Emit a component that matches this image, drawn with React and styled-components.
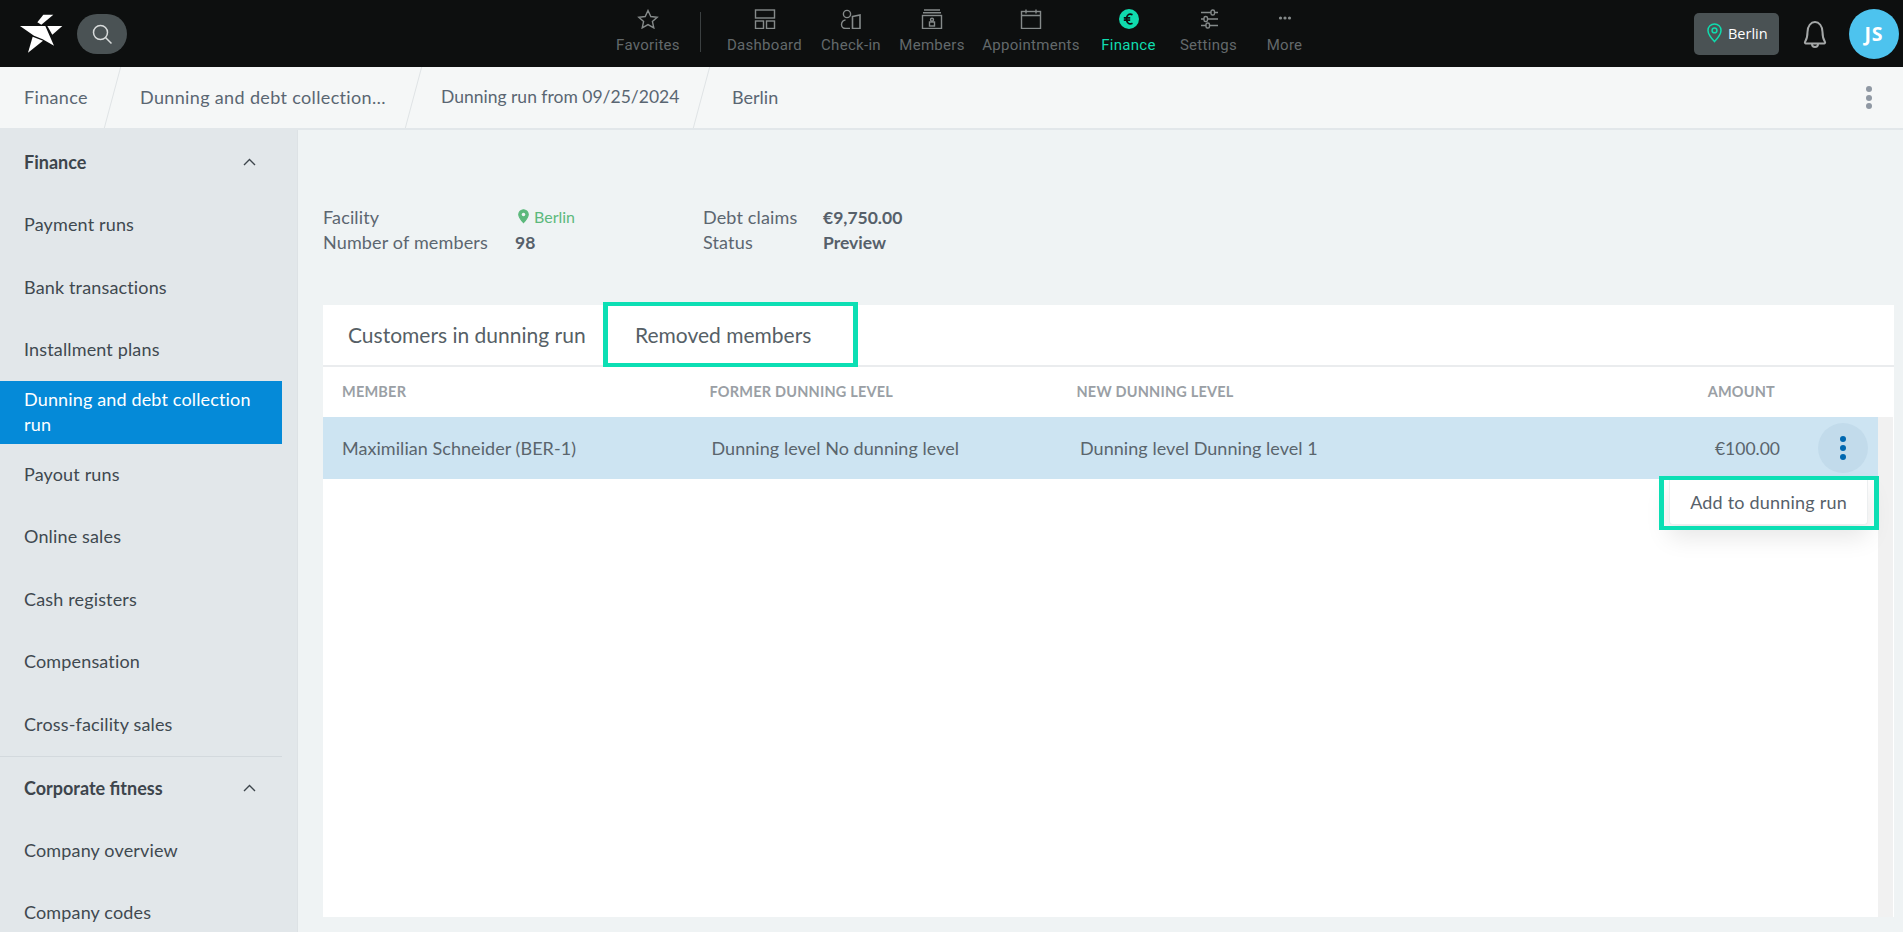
import React from "react";
import styled, { createGlobalStyle } from "styled-components";

const Global = createGlobalStyle`
  html, body { margin: 0; padding: 0; height: 100%; overflow: hidden; background: #eff3f4; }
  * { box-sizing: border-box; }
  #root { height: 100%; }
`;
const BODY_FONT = `"Lato", "Liberation Sans", sans-serif`;
const NAV_FONT = `"Roboto", "Liberation Sans", sans-serif`;
const CALLOUT = "#0cdfb4";

const Page = styled.div`
  width: 1903px; height: 932px; display: flex; flex-direction: column; overflow: hidden;
  font-family: ${BODY_FONT}; color: #5c6670;
`;
const TopBar = styled.header`
  height: 67px; flex: none; background: #0d0f0f; display: flex; align-items: center; padding-left: 19px;
`;
const Logo = styled.svg`width: 45px; height: 40px; display: block; flex: none;`;
const SearchPill = styled.button`
  width: 50px; height: 40px; margin-left: 13px; border: 0; border-radius: 20px; background: #4a5254;
  display: flex; align-items: center; justify-content: center; padding: 0; flex: none;
`;
const Nav = styled.nav`display: flex; align-items: stretch; height: 67px; margin-left: 479px;`;
const NavItem = styled.div`
  width: ${p => p.$w}px; display: flex; flex-direction: column; align-items: center; padding-top: 9px;
  font: 400 15px/20px ${NAV_FONT}; letter-spacing: .3px; color: ${p => p.$active ? "#10dcae" : "#63696b"};
  white-space: nowrap;
`;
const NavIcon = styled.svg`width: 22px; height: 20px; display: block; margin-bottom: 6px; flex: none;`;
const NavDivider = styled.div`width: 1px; height: 40px; margin: 12px 16px 0 10px; background: #3b4041; flex: none;`;
const TopRight = styled.div`margin-left: auto; display: flex; align-items: center; padding-right: 4px;`;
const LocationChip = styled.div`
  width: 85px; height: 42px; border-radius: 5px; background: #4a5254; display: flex; align-items: center;
  padding: 0 0 1px 13px; gap: 6px; color: #fff; font: 400 14.5px "Open Sans", sans-serif;
`;
const Bell = styled.svg`width: 26px; height: 31px; margin: 0 21px 0 23px; display: block;`;
const Avatar = styled.div`
  width: 50px; height: 50px; border-radius: 50%; background: #4dc3ee; color: #fff; display: flex;
  align-items: center; justify-content: center; font: 700 19.5px "Open Sans", sans-serif; letter-spacing: 1px;
`;
const CrumbBar = styled.div`
  height: 63px; flex: none; background: #f5f7f7; border-bottom: 2px solid #e2e7ea; display: flex; align-items: center;
`;
const Crumb = styled.div`
  width: ${p => p.$w}px; padding: 0 0 2px ${p => p.$pad}px; height: 100%; position: relative; display: flex; align-items: center;
  font-size: ${p => p.$size || 18}px; letter-spacing: ${p => p.$ls ?? 0.35}px; color: #5a6672; white-space: nowrap;
  ${p => p.$sep && `&::after {
    content: ""; position: absolute; right: 8px; top: 0; bottom: 0; width: 1px; background: #dfe3e5;
    transform: skewX(-15deg);
  }`}
`;
const KebabBar = styled.div`
  margin-left: auto; margin-right: 31px; display: flex; flex-direction: column; gap: 2.6px;
`;
const Dot = styled.span`
  width: ${p => p.$size}px; height: ${p => p.$size}px; border-radius: 50%; background: ${p => p.$color}; display: block;
`;
const Body = styled.div`flex: 1; display: flex; min-height: 0;`;
const Sidebar = styled.aside`
  width: 298px; flex: none; background: #e2e7ea; overflow: hidden; border-right: 1px solid #dde2e5;
`;
const SideHead = styled.div`
  width: 282px; height: ${p => p.$h}px; padding: 0 24px; display: flex; align-items: center; justify-content: space-between;
  font-size: 18px; font-weight: 700; color: #3d454c;
  ${p => p.$top && `border-top: 1px solid #d3d9dd;`}
`;
const SideItem = styled.div`
  width: 282px; height: 62.4px; padding: 0 24px; display: flex; align-items: center;
  font-size: 18px; letter-spacing: .15px; line-height: 25.5px; color: ${p => p.$active ? "#fff" : "#3f4950"};
  background: ${p => p.$active ? "#058ad8" : "transparent"};
`;
const Main = styled.main`flex: 1; display: flex; flex-direction: column; padding: 75px 9px 15px 25px; min-width: 0;`;
const Info = styled.div`
  display: grid; grid-template-columns: 192px 188px 120px 1fr; grid-auto-rows: 25px; align-items: center;
  margin-bottom: 50px;
`;
const Label = styled.div`font-size: 18px; letter-spacing: .15px; color: #5c6670; padding-bottom: 2px;`;
const Value = styled.div`font-size: 17.5px; font-weight: 700; color: #56606a;`;
const FacilityValue = styled.div`
  display: flex; align-items: center; gap: 5px; padding-left: 3px; margin-top: -2px; color: #5cb97c; font-size: 16px;
`;
const Panel = styled.section`flex: 1; background: #fff; display: flex; flex-direction: column; min-height: 0;`;
const Tabs = styled.div`height: 62px; flex: none; border-bottom: 2px solid #eaecee; display: flex;`;
const Tab = styled.div`
  width: ${p => p.$w}px; padding-left: ${p => p.$pad}px; display: flex; align-items: center; position: relative;
  font-size: 21px; color: #565f66; padding-bottom: 2px; white-space: nowrap;
`;
const TabCallout = styled.span`
  position: absolute; left: 0; right: 0; top: -3px; bottom: -2px; border: 5px solid ${CALLOUT}; border-width: 4.5px 5px;
`;
const HeadRow = styled.div`
  height: 50px; flex: none; display: grid; grid-template-columns: 367.5px 367px 1fr auto; align-items: center;
  padding: 0 119px 2px 19px; font-size: 14.5px; letter-spacing: .2px; font-weight: 700; color: #9a9fa5; text-transform: uppercase;
`;
const ListArea = styled.div`flex: 1; display: flex; min-height: 0; padding-right: 1px;`;
const List = styled.div`flex: 1; min-width: 0;`;
const Scrollbar = styled.div`width: 15px; flex: none; background: #f1f1f1;`;
const DataRow = styled.div`
  height: 62px; position: relative; display: grid; grid-template-columns: 369.5px 368.5px 1fr auto 98px; align-items: center;
  padding-left: 19px; background: #cde4f2; font-size: 18px; letter-spacing: .05px; color: #5a656d;
`;
const Amount = styled.div`font-size: 17.5px; letter-spacing: 0;`;
const RowAction = styled.div`
  position: absolute; right: 10px; top: 6px; width: 50px; height: 50px; border-radius: 50%; background: #c2dbeb;
  display: flex; flex-direction: column; align-items: center; justify-content: center; gap: 2.6px;
`;
const Menu = styled.div`
  position: absolute; right: 10px; top: 62px; width: 199px; height: 46px; padding-top: 1px; background: #fff; border-radius: 0 0 4px 4px;
  border: 1px solid #eceff0; border-top: 0; display: flex; align-items: center; justify-content: center;
  font-size: 18px; letter-spacing: .2px; color: #57616a; box-shadow: 0 12px 24px rgba(0,0,0,.1); white-space: nowrap;
`;
const MenuCallout = styled.span`
  position: absolute; left: -11px; right: -12px; top: -3px; bottom: -6px; border: 5px solid ${CALLOUT}; border-width: 4.5px 5px;
`;

const stroke = { fill: "none", stroke: "#858a8a", strokeWidth: 1.4 };
const icons = {
  star: <path {...stroke} d="M11 1.5l2.8 6 6.4.7-4.8 4.3 1.4 6.4L11 15.6 5.2 18.9l1.4-6.4L1.8 8.2l6.4-.7z" />,
  dash: <g {...stroke}><rect x="1.5" y="1" width="19" height="8" /><rect x="1.5" y="12" width="8" height="7.5" /><rect x="12.5" y="12" width="8" height="7.5" /></g>,
  check: <g {...stroke}><circle cx="7" cy="5" r="3.6" /><path d="M10 19.5H5.5C3.5 19.5 1.5 18 1.5 15.5S3.5 11 5.5 11" /><path d="M12.5 7.5l7.5-1.5v13.5H12.5z" strokeWidth="1.6" /></g>,
  members: <g {...stroke}><path d="M3 1h16M2 3.8h18" /><rect x="1.5" y="6.5" width="19" height="13" /><circle cx="11" cy="10.7" r="1.5" /><rect x="8.5" y="13" width="5" height="4" /></g>,
  calendar: <g {...stroke}><rect x="1.5" y="2.5" width="19" height="17" /><path d="M1.5 6.5h19M6 .5v4M16 .5v4" /></g>,
  euro: <g><circle cx="11" cy="10" r="10" fill="#10dcae" /><path d="M14.5 5.8c-3-1.7-6-.2-6 4.2s3 5.9 6 4.2M5.8 8.8h6.4M5.8 11.2h6.4" fill="none" stroke="#0d0f0f" strokeWidth="1.7" /></g>,
  settings: <g {...stroke}><path d="M3 3.5h10M16.5 3.5H20M3 10h3M9.5 10H20M3 16.5h5M11.5 16.5H20" /><rect x="13" y="1" width="3.5" height="5" rx="1.6" /><rect x="6" y="7.5" width="3.5" height="5" rx="1.6" /><rect x="8" y="14" width="3.5" height="5" rx="1.6" /></g>,
  more: <g fill="#858a8a"><circle cx="6.5" cy="9" r="1.6" /><circle cx="11" cy="9" r="1.6" /><circle cx="15.5" cy="9" r="1.6" /></g>,
};
const navItems = [
  ["Dashboard", "dash", 95], ["Check-in", "check", 78], ["Members", "members", 84], ["Appointments", "calendar", 114],
  ["Finance", "euro", 81, true], ["Settings", "settings", 79], ["More", "more", 73],
];
const Pin = ({ color, size = 15, filled }) => (
  <svg width={size} height={size * 1.3} viewBox="0 0 16 21" style={{ display: "block", flex: "none" }}>
    <path d="M8 1a7 7 0 0 0-7 7c0 4.5 7 12 7 12s7-7.500 7-12a7 7 0 0 0-7-7z" fill={filled ? color : "none"} stroke={color} strokeWidth="1.6" />
    <circle cx="8" cy="8" r="2.6" fill={filled ? "#eff3f4" : "none"} stroke={filled ? "none" : color} strokeWidth="1.6" />
  </svg>
);
const Chevron = () => (
  <svg width="13" height="8" viewBox="0 0 13 8" style={{ display: "block", marginRight: 2 }}>
    <path d="M1 7l5.500-5.500L12 7" fill="none" stroke="#3d454c" strokeWidth="1.4" />
  </svg>
);
const financeItems = ["Payment runs", "Bank transactions", "Installment plans", "Dunning and debt collection run", "Payout runs", "Online sales", "Cash registers", "Compensation", "Cross-facility sales"];

export default function App() {
  return (
    <Page>
      <Global />
      <TopBar>
        <Logo viewBox="25 20 135 120">
          <g fill="#fff">
            <polygon points="98,22 128,22 92,52 80,45" />
            <polygon points="28,56 104,56 130,115 96,96 70,85" />
            <polygon points="66,88 97,100 52,136" />
            <polygon points="110,56 155,56 125,82" />
          </g>
        </Logo>
        <SearchPill aria-label="Search">
          <svg width="22" height="22" viewBox="0 0 22 22"><circle cx="9.500" cy="9.500" r="7" fill="none" stroke="#d8dbdb" strokeWidth="1.500" /><path d="M14.500 14.500l6 6" stroke="#d8dbdb" strokeWidth="1.500" /></svg>
        </SearchPill>
        <Nav>
          <NavItem $w={84}><NavIcon viewBox="0 0 22 20">{icons.star}</NavIcon>Favorites</NavItem>
          <NavDivider />
          {navItems.map(([label, icon, w, active]) => (
            <NavItem key={label} $w={w} $active={active}>
              <NavIcon viewBox="0 0 22 20">{icons[icon]}</NavIcon>{label}
            </NavItem>
          ))}
        </Nav>
        <TopRight>
          <LocationChip><Pin color="#10dcae" />Berlin</LocationChip>
          <Bell viewBox="0 0 26 31">
            <path d="M3 24c2-3 2.500-5 2.500-10C5.500 8 9 4 13 4s7.500 4 7.500 10c0 5 .5 7 2.500 10a1 1 0 0 1-1 1.500H4A1 1 0 0 1 3 24z" fill="none" stroke="#a5a8a8" strokeWidth="2" />
            <path d="M10 26c0 4 6 4 6 0" fill="none" stroke="#a5a8a8" strokeWidth="2" />
          </Bell>
          <Avatar>JS</Avatar>
        </TopRight>
      </TopBar>
      <CrumbBar>
        <Crumb $w={121} $pad={24} $sep>Finance</Crumb>
        <Crumb $w={301} $pad={19} $sep>Dunning and debt collection…</Crumb>
        <Crumb $w={288} $pad={19} $size={17.5} $ls={0} $sep>Dunning run from 09/25/2024</Crumb>
        <Crumb $w={120} $pad={22} $ls={0}>Berlin</Crumb>
        <KebabBar>
          <Dot $size={6} $color="#8f98a3" /><Dot $size={6} $color="#8f98a3" /><Dot $size={6} $color="#8f98a3" />
        </KebabBar>
      </CrumbBar>
      <Body>
        <Sidebar>
          <SideHead $h={64}>Finance<Chevron /></SideHead>
          {financeItems.map((t, i) => <SideItem key={t} $active={i === 3}>{t}</SideItem>)}
          <SideHead $h={64} $top>Corporate fitness<Chevron /></SideHead>
          <SideItem>Company overview</SideItem>
          <SideItem>Company codes</SideItem>
        </Sidebar>
        <Main>
          <Info>
            <Label>Facility</Label>
            <FacilityValue><Pin color="#5cb97c" size={11} filled />Berlin</FacilityValue>
            <Label>Debt claims</Label>
            <Value>€9,750.00</Value>
            <Label>Number of members</Label>
            <Value>98</Value>
            <Label>Status</Label>
            <Value>Preview</Value>
          </Info>
          <Panel>
            <Tabs>
              <Tab $w={280} $pad={25}>Customers in dunning run</Tab>
              <Tab $w={255} $pad={32}>Removed members<TabCallout /></Tab>
            </Tabs>
            <HeadRow>
              <div>Member</div><div>Former dunning level</div><div>New dunning level</div><div>Amount</div>
            </HeadRow>
            <ListArea>
              <List>
                <DataRow>
                  <div>Maximilian Schneider (BER-1)</div>
                  <div>Dunning level No dunning level</div>
                  <div>Dunning level Dunning level 1</div>
                  <Amount>€100.00</Amount>
                  <div />
                  <RowAction>
                    <Dot $size={6} $color="#0068b0" /><Dot $size={6} $color="#0068b0" /><Dot $size={6} $color="#0068b0" />
                  </RowAction>
                  <Menu>Add to dunning run<MenuCallout /></Menu>
                </DataRow>
              </List>
              <Scrollbar />
            </ListArea>
          </Panel>
        </Main>
      </Body>
    </Page>
  );
}
